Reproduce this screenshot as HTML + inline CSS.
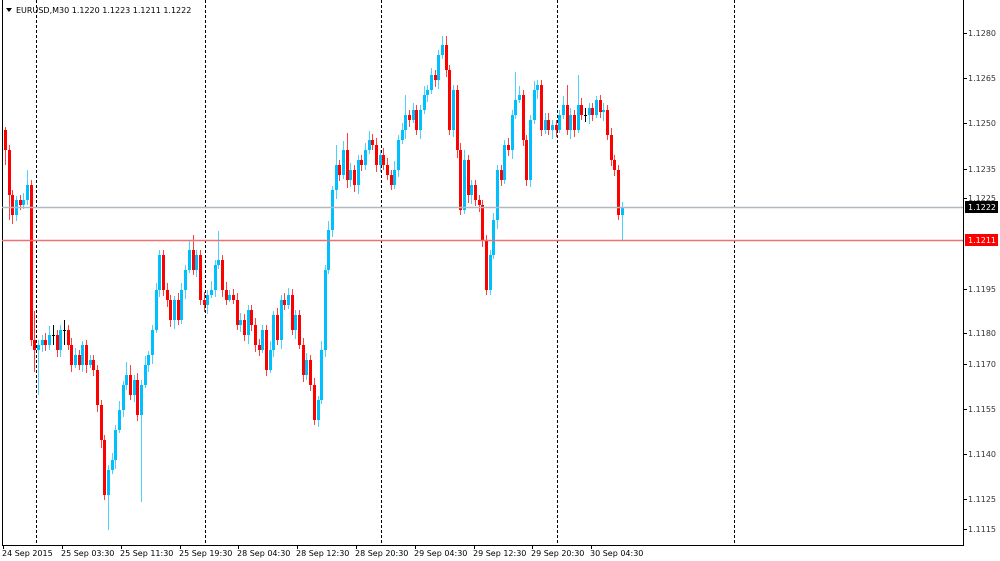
<!DOCTYPE html>
<html><head><meta charset="utf-8"><style>
html,body{margin:0;padding:0;background:#fff;width:1000px;height:561px;overflow:hidden}
svg{display:block}
text{font-family:"DejaVu Sans","Liberation Sans",sans-serif;font-size:8px;fill:#000}
.a text{fill:#333}
</style></head><body>
<svg width="1000" height="561" xmlns="http://www.w3.org/2000/svg">
<rect x="0" y="0" width="1000" height="561" fill="#fff"/>
<line x1="2.5" y1="0" x2="2.5" y2="545" stroke="#000"/>
<line x1="963.5" y1="0" x2="963.5" y2="545" stroke="#000"/>
<line x1="2" y1="545.5" x2="964" y2="545.5" stroke="#000"/>
<g stroke="#000" stroke-dasharray="3,2">
<line x1="36.5" y1="0" x2="36.5" y2="545"/>
<line x1="205.5" y1="0" x2="205.5" y2="545"/>
<line x1="381.5" y1="0" x2="381.5" y2="545"/>
<line x1="557.5" y1="0" x2="557.5" y2="545"/>
<line x1="734.5" y1="0" x2="734.5" y2="545"/>
</g>

<!-- blue wicks -->
<path stroke="#00bfff" stroke-opacity="0.7" stroke-width="1" fill="none" d="
M16.5 196V221M23.5 193V209M27.5 170V205M38.5 340V395M42.5 335V352M49.5 326V350M60.5 325V357M75.5 348V368M82.5 341V372M90.5 355V368M108.5 465V530M112.5 453V474M115.5 425V469M119.5 401V433M123.5 381V417M126.5 362V390M134.5 375V402M141.5 380V502M145.5 356V388M148.5 351V372M152.5 325V364M156.5 283V333M159.5 250V297M174.5 296V329M181.5 283V324M185.5 265V299M189.5 241V273M196.5 250V277M207.5 290V314M211.5 281V298M215.5 260V297M218.5 231V269M229.5 290V302M240.5 313V332M248.5 305V344M262.5 325V353M270.5 341V373M273.5 311V357M281.5 295V349M288.5 288V309M295.5 310V339M306.5 353V380M318.5 396V427M321.5 341V404M325.5 265V357M328.5 221V274M332.5 186V237M336.5 145V199M343.5 141V179M350.5 163V187M358.5 155V194M365.5 143V170M369.5 131V154M380.5 150V172M394.5 161V189M398.5 135V177M402.5 123V144M405.5 95V139M413.5 103V123M420.5 105V139M424.5 86V114M427.5 85V102M431.5 68V94M438.5 50V89M442.5 36V59M453.5 85V137M464.5 150V214M471.5 180V204M490.5 250V295M493.5 213V259M497.5 165V229M504.5 140V184M512.5 110V159M515.5 72V119M519.5 86V103M530.5 115V187M534.5 81V124M537.5 80V99M545.5 113V134M552.5 120V139M559.5 110V133M563.5 96V119M570.5 108V139M578.5 75V133M589.5 103V124M596.5 96V118M603.5 103V121M622.5 202V240"/>
<!-- blue bodies -->
<path stroke="#00bfff" stroke-width="3" fill="none" d="
M16.5 200V215M23.5 200V205M27.5 185V200M38.5 345V350M42.5 340V345M49.5 335V345M60.5 330V350M75.5 355V365M82.5 345V365M90.5 360V365M108.5 470V495M112.5 460V470M115.5 430V460M119.5 410V430M123.5 385V410M126.5 375V385M134.5 380V395M141.5 385V415M145.5 365V385M148.5 355V365M152.5 330V355M156.5 290V330M159.5 255V290M174.5 300V320M181.5 290V320M185.5 270V290M189.5 250V270M196.5 255V270M207.5 295V305M211.5 290V295M215.5 265V290M218.5 260V265M229.5 295V300M240.5 320V325M248.5 310V335M262.5 330V350M270.5 350V370M273.5 315V350M281.5 300V340M288.5 295V305M295.5 315V330M306.5 360V375M318.5 400V420M321.5 350V400M325.5 270V350M328.5 230V270M332.5 190V230M336.5 165V190M343.5 150V175M350.5 170V180M358.5 160V185M365.5 150V165M369.5 140V150M380.5 155V165M394.5 170V185M398.5 140V170M402.5 130V140M405.5 115V130M413.5 110V120M420.5 110V130M424.5 95V110M427.5 90V95M431.5 75V90M438.5 55V80M442.5 45V55M453.5 90V130M464.5 160V210M471.5 185V195M490.5 255V290M493.5 220V255M497.5 170V220M504.5 145V180M512.5 115V150M515.5 100V115M519.5 95V100M530.5 120V180M534.5 90V120M537.5 85V90M545.5 120V130M552.5 125V130M559.5 115V130M563.5 105V115M570.5 115V130M578.5 105V130M589.5 108V115M596.5 100V115M603.5 110V112M622.5 207V215"/>

<!-- red wicks -->
<path stroke="#ff0000" stroke-opacity="0.75" stroke-width="1" fill="none" d="
M5.5 127V165M9.5 145V220M12.5 190V224M20.5 195V210M31.5 180V346M34.5 311V372M45.5 333V351M57.5 330V357M68.5 325V350M71.5 338V372M79.5 350V370M86.5 340V373M93.5 355V376M97.5 365V412M101.5 400V448M104.5 435V500M130.5 365V400M137.5 373V421M163.5 250V296M167.5 283V307M170.5 295V327M178.5 293V325M193.5 235V275M200.5 250V305M204.5 292V312M222.5 255V297M226.5 282V305M233.5 289V304M237.5 293V330M244.5 314V341M251.5 305V331M255.5 318V352M259.5 339V356M266.5 325V376M277.5 308V345M284.5 293V310M292.5 289V335M299.5 310V349M303.5 338V382M310.5 355V391M314.5 378V425M339.5 160V181M347.5 133V188M354.5 165V192M361.5 155V171M372.5 134V150M376.5 138V172M383.5 148V170M387.5 158V180M391.5 170V190M409.5 110V127M416.5 105V135M435.5 70V87M446.5 36V77M449.5 65V135M457.5 85V158M460.5 143V215M468.5 155V203M475.5 180V206M479.5 195V212M482.5 200V247M486.5 235V295M501.5 165V186M508.5 138V156M523.5 90V146M526.5 135V186M541.5 80V136M548.5 113V135M556.5 120V137M567.5 85V135M574.5 110V137M581.5 98V120M592.5 103V121M600.5 95V118M607.5 105V140M611.5 128V166M614.5 155V176M618.5 165V220"/>
<!-- red bodies -->
<path stroke="#ff0000" stroke-width="3" fill="none" d="
M5.5 130V150M9.5 150V195M12.5 195V215M20.5 200V205M31.5 185V340M34.5 340V350M45.5 340V345M57.5 335V350M68.5 330V345M71.5 345V365M79.5 355V365M86.5 345V365M93.5 360V370M97.5 370V405M101.5 405V440M104.5 440V495M130.5 375V395M137.5 380V415M163.5 255V290M167.5 290V300M170.5 300V320M178.5 300V320M193.5 250V270M200.5 255V300M204.5 300V305M222.5 260V290M226.5 290V300M233.5 295V300M237.5 300V325M244.5 320V335M251.5 310V325M255.5 325V345M259.5 345V350M266.5 330V370M277.5 315V340M284.5 300V305M292.5 295V330M299.5 315V345M303.5 345V375M310.5 360V385M314.5 385V420M339.5 165V175M347.5 150V180M354.5 170V185M361.5 160V165M372.5 140V145M376.5 145V165M383.5 155V165M387.5 165V175M391.5 175V185M409.5 115V120M416.5 110V130M435.5 75V80M446.5 45V70M449.5 70V130M457.5 90V150M460.5 150V210M468.5 160V195M475.5 185V200M479.5 200V205M482.5 205V240M486.5 240V290M501.5 170V180M508.5 145V150M523.5 95V140M526.5 140V180M541.5 85V130M548.5 120V130M556.5 125V130M567.5 105V130M574.5 115V130M581.5 105V115M592.5 108V115M600.5 100V112M607.5 110V135M611.5 135V160M614.5 160V170M618.5 170V215"/>

<!-- doji -->
<path stroke="#000" stroke-width="1" fill="none" d="M53.5 325V345M52 335.5H55M64.5 320V345M63 330.5H66M585.5 108V122M584 115.5H587"/>

<line x1="2" y1="207.5" x2="963" y2="207.5" stroke="#b0b8c0" stroke-width="1.5"/>
<line x1="2" y1="240.5" x2="963" y2="240.5" stroke="#f07070" stroke-width="1.5"/>
<path d="M6 8 L12 8 L9 12 Z" fill="#000"/>
<text x="16" y="13">EURUSD,M30  1.1220 1.1223 1.1211 1.1222</text>

<g class="a">
<path stroke="#000" d="M963 33.5h4M963 78.5h4M963 123.5h4M963 169.5h4M963 198.5h4M963 289.5h4M963 333.5h4M963 364.5h4M963 409.5h4M963 454.5h4M963 499.5h4M963 529.5h4"/>
<text x="968" y="36">1.1280</text>
<text x="968" y="81">1.1265</text>
<text x="968" y="126">1.1250</text>
<text x="968" y="172">1.1235</text>
<text x="968" y="201">1.1225</text>
<text x="968" y="292">1.1195</text>
<text x="968" y="336">1.1180</text>
<text x="968" y="367">1.1170</text>
<text x="968" y="412">1.1155</text>
<text x="968" y="457">1.1140</text>
<text x="968" y="502">1.1125</text>
<text x="968" y="532">1.1115</text>
</g>
<rect x="965" y="201" width="33" height="12" fill="#000"/>
<text x="968" y="210" style="fill:#fff">1.1222</text>
<rect x="965" y="234" width="33" height="12" fill="#f00"/>
<text x="968" y="243" style="fill:#fff">1.1211</text>

<path stroke="#000" d="M3.5 545v4M62.5 545v4M121.5 545v4M180.5 545v4M238.5 545v4M297.5 545v4M356.5 545v4M415.5 545v4M474.5 545v4M532.5 545v4M591.5 545v4"/>
<text x="2" y="556">24 Sep 2015</text>
<text x="61" y="556">25 Sep 03:30</text>
<text x="120" y="556">25 Sep 11:30</text>
<text x="179" y="556">25 Sep 19:30</text>
<text x="237" y="556">28 Sep 04:30</text>
<text x="296" y="556">28 Sep 12:30</text>
<text x="355" y="556">28 Sep 20:30</text>
<text x="414" y="556">29 Sep 04:30</text>
<text x="473" y="556">29 Sep 12:30</text>
<text x="531" y="556">29 Sep 20:30</text>
<text x="590" y="556">30 Sep 04:30</text>
</svg>
</body></html>
